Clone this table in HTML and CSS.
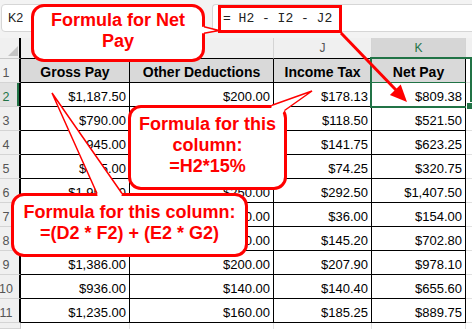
FILE: index.html
```html
<!DOCTYPE html>
<html>
<head>
<meta charset="utf-8">
<link rel="stylesheet" href="styles.css">
</head>
<body>
<div class="sheet">
  <div class="formula-bar">
    <div class="name-box">K2</div>
    <div class="formula-input"><span class="formula-text">= H2 - I2 - J2</span></div>
  </div>
  <div class="grid">
    <div class="corner"><svg width="10" height="10" viewBox="0 0 10 10"><polygon points="10,0 10,10 0,10" fill="#c4c4c4"/></svg></div>
    <div class="col-head">H</div>
    <div class="col-head">I</div>
    <div class="col-head">J</div>
    <div class="col-head sel">K</div>
    <div class="col-head pad"></div>

    <div class="row-head">1</div>
    <div class="cell hdr">Gross Pay</div>
    <div class="cell hdr">Other Deductions</div>
    <div class="cell hdr">Income Tax</div>
    <div class="cell hdr k1">Net Pay</div>
    <div class="pad-cell"></div>

    <div class="row-head sel">2</div>
    <div class="cell">$1,187.50</div>
    <div class="cell">$200.00</div>
    <div class="cell">$178.13</div>
    <div class="cell">$809.38</div>
    <div class="pad-cell"></div>

    <div class="row-head">3</div>
    <div class="cell">$790.00</div>
    <div class="cell">$150.00</div>
    <div class="cell">$118.50</div>
    <div class="cell">$521.50</div>
    <div class="pad-cell"></div>

    <div class="row-head">4</div>
    <div class="cell">$945.00</div>
    <div class="cell">$180.00</div>
    <div class="cell">$141.75</div>
    <div class="cell">$623.25</div>
    <div class="pad-cell"></div>

    <div class="row-head">5</div>
    <div class="cell">$495.00</div>
    <div class="cell">$100.00</div>
    <div class="cell">$74.25</div>
    <div class="cell">$320.75</div>
    <div class="pad-cell"></div>

    <div class="row-head">6</div>
    <div class="cell">$1,950.00</div>
    <div class="cell">$250.00</div>
    <div class="cell">$292.50</div>
    <div class="cell">$1,407.50</div>
    <div class="pad-cell"></div>

    <div class="row-head">7</div>
    <div class="cell">$240.00</div>
    <div class="cell">$50.00</div>
    <div class="cell">$36.00</div>
    <div class="cell">$154.00</div>
    <div class="pad-cell"></div>

    <div class="row-head">8</div>
    <div class="cell">$968.00</div>
    <div class="cell">$120.00</div>
    <div class="cell">$145.20</div>
    <div class="cell">$702.80</div>
    <div class="pad-cell"></div>

    <div class="row-head">9</div>
    <div class="cell">$1,386.00</div>
    <div class="cell">$200.00</div>
    <div class="cell">$207.90</div>
    <div class="cell">$978.10</div>
    <div class="pad-cell"></div>

    <div class="row-head">10</div>
    <div class="cell">$936.00</div>
    <div class="cell">$140.00</div>
    <div class="cell">$140.40</div>
    <div class="cell">$655.60</div>
    <div class="pad-cell"></div>

    <div class="row-head">11</div>
    <div class="cell">$1,235.00</div>
    <div class="cell">$160.00</div>
    <div class="cell">$185.25</div>
    <div class="cell">$889.75</div>
    <div class="pad-cell"></div>

    <div class="row-head empty"></div>
    <div class="blank"></div>
    <div class="blank"></div>
    <div class="blank"></div>
    <div class="blank"></div>
    <div class="blank last"></div>

    <div class="selection"></div>
  </div>

  <div class="annotations">
    <div class="callout c1"><span>Formula for Net</span><span>Pay</span></div>
    <div class="callout c2"><span>Formula for this</span><span>column:</span><span>=H2*15%</span></div>
    <div class="callout c3"><span>Formula for this column:</span><span>=(D2 * F2) + (E2 * G2)</span></div>
    <svg class="overlay" width="472" height="329" viewBox="0 0 472 329">
      <polygon points="199,27 204,26.8 219,30.5 204,33.2 199,33.2" fill="#fff"/>
      <polyline points="204,26.8 219,30.5 204,33.2" fill="none" stroke="#f00" stroke-width="1.5"/>
      <polygon points="312,91 272,105.2 271,109 281.5,115 284.5,110.5" fill="#fff"/>
      <polyline points="272,105.2 312,91 284.5,110.5" fill="none" stroke="#f00" stroke-width="1.5"/>
      <polygon points="52,93 97,193 98,198.5 121,198.5 122,193" fill="#fff"/>
      <polyline points="97,193.5 52,93 122,193.5" fill="none" stroke="#f00" stroke-width="1.5"/>
      <line x1="341" y1="33" x2="396" y2="90" stroke="#f00" stroke-width="3"/>
      <polygon points="407,102 400.7,84.5 389.9,94.9" fill="#f00"/>
    </svg>
  </div>
</div>
</body>
</html>
```

FILE: styles.css
```css
* { box-sizing: border-box; }
html, body { margin: 0; padding: 0; }
body {
  width: 472px;
  height: 329px;
  overflow: hidden;
  background: #fff;
  font-family: "Liberation Sans", Arial, sans-serif;
}
.sheet {
  position: relative;
  width: 472px;
  height: 329px;
  display: flex;
  flex-direction: column;
}
.formula-bar {
  height: 38px;
  flex: none;
  background: #f3f3f3;
  display: flex;
  align-items: flex-start;
  padding: 4px 0 0 1px;
}
.name-box {
  width: 96px;
  height: 28px;
  background: #fff;
  border: 1px solid #d6d6d6;
  border-radius: 4px;
  font-size: 12.5px;
  color: #222;
  display: flex;
  align-items: center;
  padding-left: 6px;
}
.formula-input {
  margin-left: auto;
  width: 260px;
  height: 28px;
  background: #fff;
  border: 1px solid #d6d6d6;
  border-right: none;
  border-radius: 4px 0 0 4px;
  padding-left: 5px;
  display: flex;
  align-items: flex-start;
}
.formula-text {
  flex: none;
  height: 28px;
  width: 124px;
  border: 3px solid #f00;
  padding-left: 2px;
  font-family: "Liberation Mono", monospace;
  font-size: 13px;
  line-height: 22px;
  color: #222;
  white-space: pre;
}
.grid {
  flex: 1;
  display: grid;
  grid-template-columns: 21px 109px 144px 98px 94px 1fr;
  grid-template-rows: 21px repeat(11, 24px) 1fr;
  position: relative;
}
.corner {
  background: #f0f0f0;
  border-right: 2px solid #000;
  border-bottom: 1px solid #c8c8c8;
  display: flex;
  align-items: flex-end;
  justify-content: flex-end;
  padding: 0 1px 2px 0;
}
.col-head {
  background: #f0f0f0;
  border-right: 1px solid #d4d4d4;
  border-bottom: 1px solid #000;
  font-size: 12px;
  color: #555;
  display: flex;
  align-items: center;
  justify-content: center;
}
.col-head.sel {
  background: #d6d6d6;
  color: #217346;
}
.col-head.pad {
  border-right: none;
  border-bottom-color: #d4d4d4;
}
.row-head {
  background: #f0f0f0;
  border-right: 2px solid #000;
  border-bottom: 1px solid #d4d4d4;
  font-size: 12.5px;
  color: #555;
  display: flex;
  align-items: flex-end;
  justify-content: center;
  padding: 0 7px 2px 0;
}
.row-head.sel {
  color: #217346;
  background: #e2e2e2;
  box-shadow: inset -2px 0 0 #217346;
}
.row-head.empty {
  border-right-color: #c8c8c8;
  border-right-width: 1px;
}
.cell {
  border-right: 1px solid #000;
  border-bottom: 1px solid #000;
  font-size: 13px;
  color: #000;
  display: flex;
  align-items: flex-end;
  justify-content: flex-end;
  padding: 0 3px 2px 0;
  white-space: nowrap;
  overflow: hidden;
}
.cell.hdr {
  background: #d9d9d9;
  font-weight: bold;
  font-size: 14px;
  justify-content: center;
  padding: 0 0 2px 0;
}
.cell.k1 {
  border-bottom-color: #217346;
}
.pad-cell {
  border-bottom: 1px solid #e1e1e1;
}
.blank {
  border-right: 1px solid #e1e1e1;
}
.blank.last { border-right: none; }
.selection {
  grid-column: 5;
  grid-row: 2 / 4;
  position: absolute;
  top: -2px;
  left: -2px;
  right: 0;
  bottom: -1px;
  border: 2px solid #217346;
  z-index: 1;
  pointer-events: none;
}
.selection::after {
  content: "";
  position: absolute;
  right: -4px;
  bottom: -4px;
  width: 6px;
  height: 6px;
  background: #217346;
  border: 1px solid #fff;
}
.annotations {
  position: absolute;
  left: 0;
  top: 0;
  width: 472px;
  height: 329px;
  pointer-events: none;
  z-index: 5;
}
.callout {
  position: absolute;
  background: #fff;
  border: 3px solid #f00;
  border-radius: 13px;
  color: #f00;
  font-weight: bold;
  font-size: 18px;
  line-height: 21px;
  text-align: center;
  display: flex;
  flex-direction: column;
  align-items: center;
  justify-content: center;
  padding-bottom: 4px;
  white-space: nowrap;
}
.c1 { left: 31px; top: 4px; width: 174px; height: 58px; }
.c2 { left: 128px; top: 105px; width: 159px; height: 85px; }
.c3 { left: 11px; top: 193px; width: 237px; height: 64px; }
.overlay {
  position: absolute;
  left: 0;
  top: 0;
}
```
